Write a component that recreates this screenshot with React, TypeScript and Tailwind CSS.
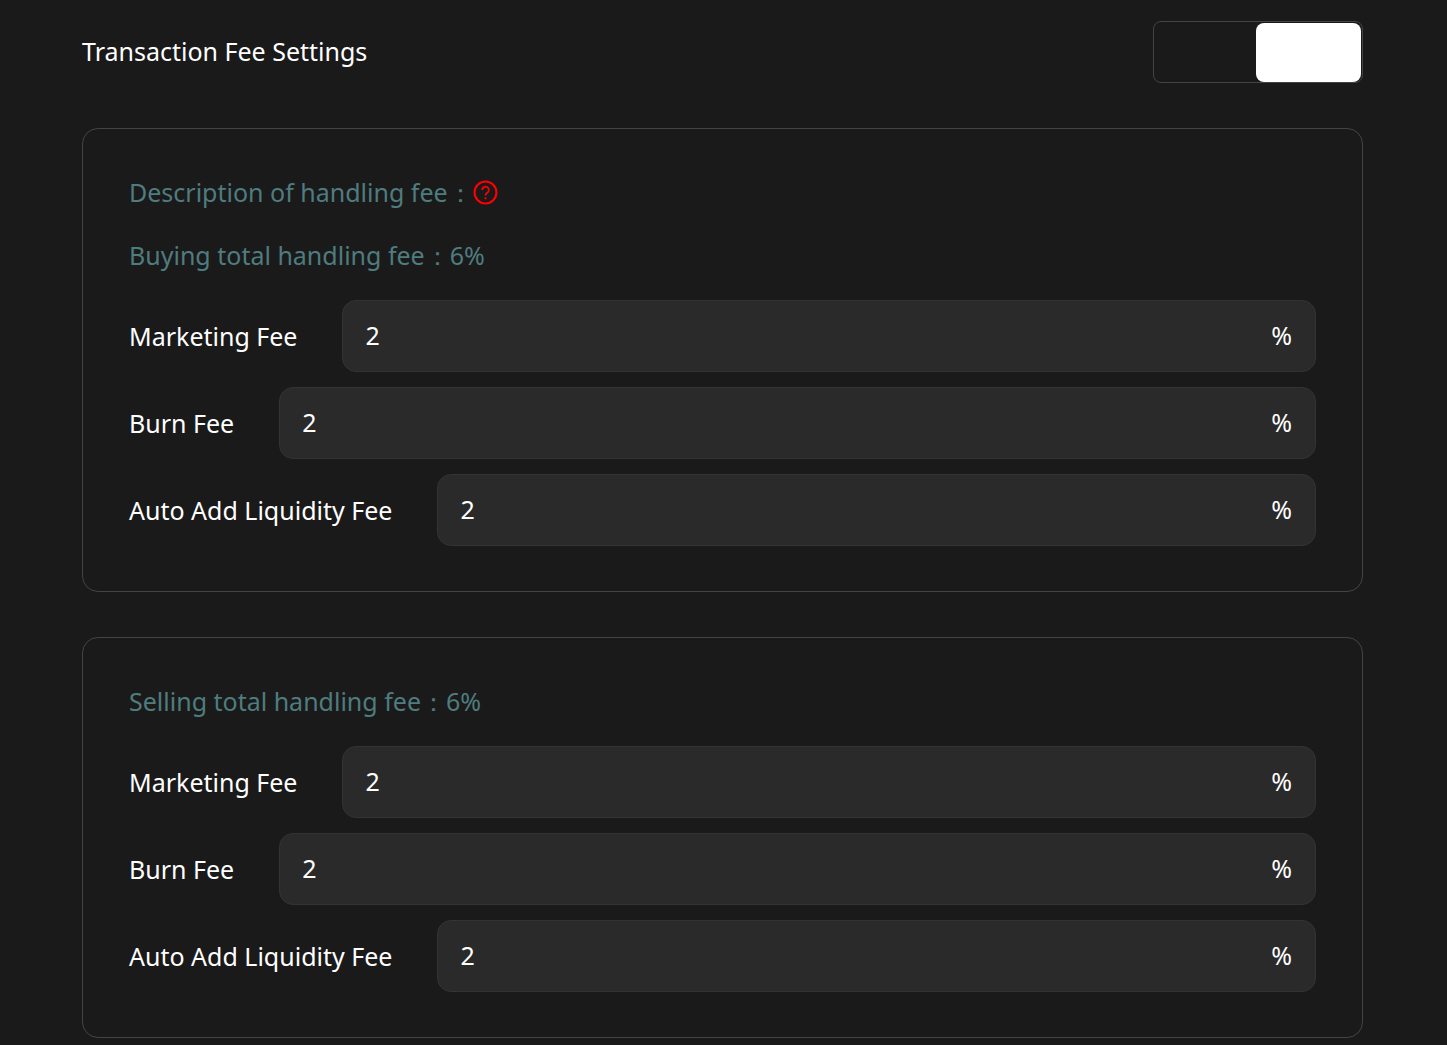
import React from 'react';

const font = "font-['Noto_Sans',sans-serif]";

const FeeRow = ({ label }: { label: string }) => (
  <div className="flex items-center gap-[45px]">
    <span className="text-[25px] leading-none whitespace-nowrap text-white">{label}</span>
    <div className="flex h-[72px] flex-1 items-center justify-between rounded-[14px] border border-[#333333] bg-[#2a2a2a] pl-[22px] pr-[23px] text-[25px] text-white">
      <span>2</span>
      <span>%</span>
    </div>
  </div>
);

const HelpIcon = () => (
  <svg viewBox="0 0 24 24" className="h-[25px] w-[25px]" fill="none" stroke="#ff0000" strokeWidth="2">
    <circle cx="12" cy="12" r="10.5" />
    <path d="M8.8 9.6a3.2 3.2 0 1 1 4.9 2.7c-1.1.7-1.7 1.3-1.7 2.6" strokeWidth="1.7" />
    <circle cx="12" cy="17.6" r="1.1" fill="#ff0000" stroke="none" />
  </svg>
);

const App: React.FC = () => {
  return (
    <div className={`h-[1045px] overflow-hidden bg-[#1a1a1a] pl-[82px] pr-[84px] pt-[21px] ${font}`}>
      {/* Header */}
      <div className="flex h-[62px] items-center justify-between">
        <h1 className="text-[25px] font-normal text-white">Transaction Fee Settings</h1>
        <div className="flex h-[62px] w-[210px] justify-end rounded-[8px] border border-[#444444] p-px pr-[1px]">
          <div className="h-[59px] w-[105px] rounded-[8px] bg-white" />
        </div>
      </div>

      {/* Buying */}
      <div className="mt-[45px] flex h-[464px] flex-col rounded-[16px] border border-[#444444] px-[46px] pt-[46px]">
        <div className="flex h-[35px] items-center text-[25px] text-[#4f7c7f]">
          <span>Description of handling fee：</span>
          <HelpIcon />
        </div>
        <div className="mt-[28px] flex h-[35px] items-center text-[25px] text-[#4f7c7f]">
          Buying total handling fee：6%
        </div>
        <div className="mt-[27px] flex flex-col gap-[15px]">
          <FeeRow label="Marketing Fee" />
          <FeeRow label="Burn Fee" />
          <FeeRow label="Auto Add Liquidity Fee" />
        </div>
      </div>

      {/* Selling */}
      <div className="mt-[45px] flex h-[401px] flex-col rounded-[16px] border border-[#444444] px-[46px] pt-[46px]">
        <div className="flex h-[35px] items-center text-[25px] text-[#4f7c7f]">
          Selling total handling fee：6%
        </div>
        <div className="mt-[27px] flex flex-col gap-[15px]">
          <FeeRow label="Marketing Fee" />
          <FeeRow label="Burn Fee" />
          <FeeRow label="Auto Add Liquidity Fee" />
        </div>
      </div>
    </div>
  );
};

export default App;
